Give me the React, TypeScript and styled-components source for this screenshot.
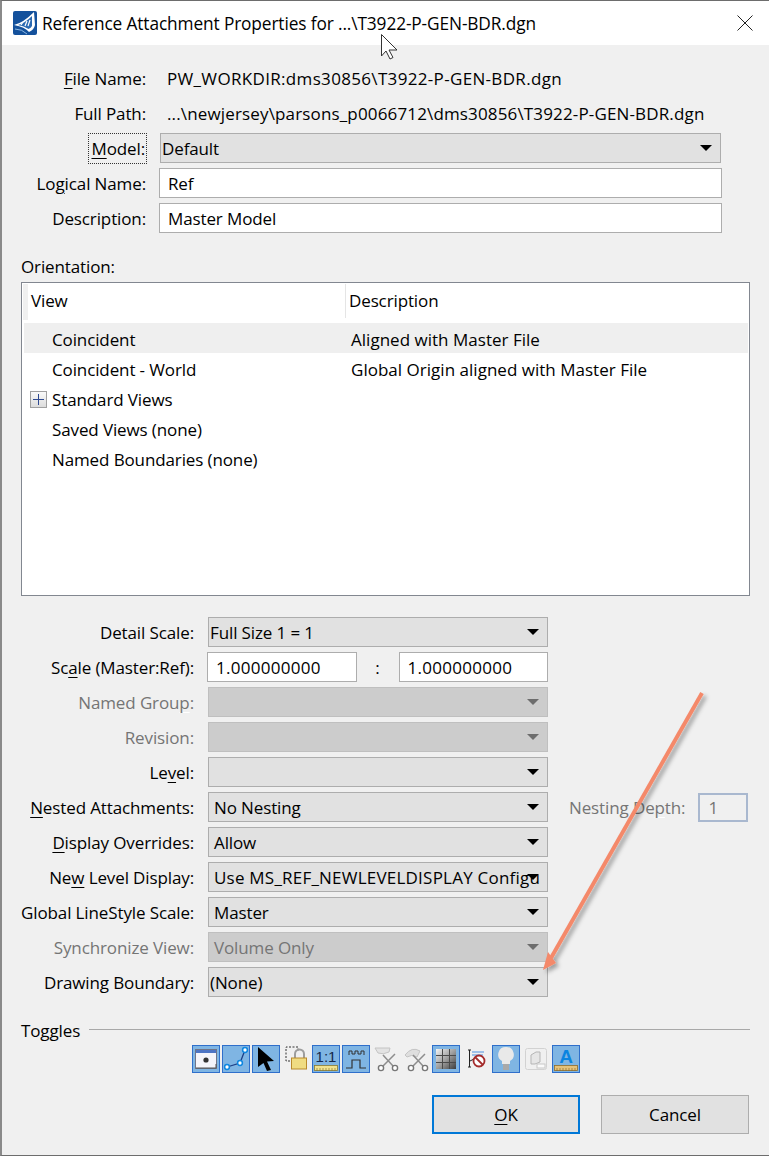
import React from 'react';
import styled, {createGlobalStyle} from 'styled-components';

const GlobalStyle = createGlobalStyle`
  html, body {
    margin: 0;
    padding: 0;
    background: #f0f0f0;
  }
  * {
    box-sizing: border-box;
  }
`;

const Dialog = styled('div')`
  position: relative;
  width: 769px;
  height: 1156px;
  overflow: hidden;
  background: #f0f0f0;
  color: #000;
  font-family: "Open Sans", "Noto Sans", sans-serif;
  font-size: 17px;
  letter-spacing: -0.12px;
  border-top: 1px solid #6d6d6d;
  border-left: 2px solid #8a8a8a;
  border-bottom: 1px solid #6d6d6d;
`;

const TitleBar = styled('div')`
  height: 44px;
  background: #fff;
  display: flex;
  align-items: center;
  padding: 0 16px 0 11px;
`;

const TitleText = styled('div')`
  flex: 1;
  margin-left: 5px;
  font-size: 17.3px;
  white-space: nowrap;
`;

const Body = styled('div')`
  display: flex;
  flex-direction: column;
  padding: 0 19px 0 19px;
`;

const HeaderGrid = styled('div')`
  display: grid;
  grid-template-columns: 125px 1fr;
  column-gap: 13px;
  row-gap: 5px;
  margin-top: 18px;
  align-items: center;
`;

const Label = styled('div')<{$disabled?: boolean}>`
  text-align: right;
  white-space: nowrap;
  color: ${p => (p.$disabled ? '#757575' : '#000')};
`;

const Key = styled('span')<{$light?: boolean}>`
  text-decoration: underline;
  text-decoration-color: ${p => (p.$light ? '#fff' : '#000')};
  text-underline-offset: 3px;
  text-decoration-thickness: 1px;
`;

const FocusRing = styled('span')`
  outline: 1px dotted #333;
  padding: 3px 1px 3px 2px;
`;

const StaticValue = styled('div')<{$spacing: number}>`
  height: 30px;
  line-height: 32px;
  margin-left: 8px;
  white-space: nowrap;
  letter-spacing: ${p => p.$spacing}px;
`;

const Combo = styled('div')<{$disabled?: boolean; $inset?: boolean; $header?: boolean}>`
  position: relative;
  height: 30px;
  width: ${p => (p.$header ? '561px' : '100%')};
  margin-left: ${p => (p.$header ? '1px' : '0')};
  display: flex;
  align-items: center;
  padding-left: ${p => (p.$inset ? '5px' : '1px')};
  white-space: nowrap;
  overflow: hidden;
  background: ${p => (p.$disabled ? '#cccccc' : '#e1e1e1')};
  border: 1px solid ${p => (p.$disabled ? '#bfbfbf' : '#adadad')};
  color: ${p => (p.$disabled ? '#757575' : '#000')};
`;

const ComboArrow = styled('span')<{$disabled?: boolean}>`
  position: absolute;
  right: 8px;
  top: 11px;
  width: 0;
  height: 0;
  border-left: 6px solid transparent;
  border-right: 6px solid transparent;
  border-top: 6px solid ${p => (p.$disabled ? '#6d6d6d' : '#000')};
`;

const WideText = styled('span')`
  letter-spacing: 0.22px;
`;

const TextBox = styled('div')<{$width?: number}>`
  height: 30px;
  width: ${p => (p.$width ? `${p.$width}px` : '100%')};
  display: flex;
  align-items: center;
  padding-left: 8px;
  background: #fff;
  border: 1px solid #adadad;
`;

const ScaleBox = styled(TextBox)`
  letter-spacing: 0.28px;
`;

const SectionLabel = styled('div')`
  margin-top: 21px;
  height: 28px;
  line-height: 25px;
`;

const Table = styled('div')`
  height: 314px;
  width: 729px;
  background: #fff;
  border: 1px solid #828790;
  padding: 1px 1px 0 2px;
`;

const TableHead = styled('div')`
  display: grid;
  grid-template-columns: 317px 1fr;
  height: 36px;
  margin-bottom: 3px;
  align-items: center;
  border-left: 5px solid #f0f0f0;
  margin-left: -1px;
`;

const HeadCell = styled('div')<{$sep?: boolean}>`
  padding-left: 3px;
  border-left: ${p => (p.$sep ? '1px solid #e5e5e5' : 'none')};
  line-height: 34px;
  height: 34px;
  margin-top: -2px;
`;

const TreeRow = styled('div')<{$active?: boolean}>`
  display: grid;
  grid-template-columns: 327px 1fr;
  height: 30px;
  padding-top: 2px;
  align-items: center;
  background: ${p => (p.$active ? '#efefef' : 'transparent')};
`;

const TreeName = styled('div')`
  display: flex;
  align-items: center;
  padding-left: 28px;
  position: relative;
  white-space: nowrap;
`;

const TreeDesc = styled('div')`
  white-space: nowrap;
  letter-spacing: 0.02px;
`;

const Expander = styled('span')`
  position: absolute;
  left: 6px;
  top: 3px;
  width: 17px;
  height: 17px;
  border: 1px solid #a0a0a0;
  background: linear-gradient(#fafafa, #dcdcdc);
  &::before, &::after {
    content: '';
    position: absolute;
    background: #2f4a92;
  }
  &::before {
    left: 2px;
    right: 2px;
    top: 7px;
    height: 1px;
  }
  &::after {
    top: 2px;
    bottom: 2px;
    left: 7px;
    width: 1px;
  }
`;

const FormGrid = styled('div')`
  display: grid;
  grid-template-columns: 173px 340px 1fr;
  column-gap: 14px;
  row-gap: 5px;
  margin-top: 21px;
  align-items: center;
`;

const ScaleFields = styled('div')`
  display: flex;
  align-items: center;
  margin-left: -1px;
`;

const ScaleColon = styled('span')`
  width: 42px;
  flex: none;
  text-align: center;
`;

const NestingCell = styled('div')`
  display: flex;
  align-items: center;
  gap: 13px;
  margin-left: 7px;
  white-space: nowrap;
  color: #757575;
`;

const DepthBox = styled('div')`
  flex: none;
  width: 50px;
  height: 29px;
  padding-left: 8px;
  display: flex;
  align-items: center;
  border: 2px solid #a9b8cf;
`;

const TogglesHead = styled('div')`
  display: flex;
  align-items: center;
  margin-top: 18px;
  height: 30px;
  gap: 9px;
`;

const TogglesRule = styled('div')`
  flex: 1;
  height: 1px;
  margin-top: -2px;
  background: #a8a8a8;
`;

const IconRow = styled('div')`
  display: flex;
  align-items: center;
  margin: 0 0 0 171px;
  height: 28px;
`;

const ToggleIcon = styled('div')<{$on?: boolean; $w?: number; $ml?: number}>`
  flex: none;
  width: ${p => p.$w ?? 28}px;
  height: 28px;
  margin-left: ${p => p.$ml ?? 0}px;
  background: ${p => (p.$on ? '#7fb5e3' : 'transparent')};
  border: ${p => (p.$on ? '1px solid #2f6fcb' : 'none')};
  display: flex;
  flex-direction: column;
  align-items: center;
  justify-content: center;
  & svg {
    display: block;
  }
`;

const IconCaption = styled('span')<{$blue?: boolean}>`
  display: block;
  height: 17px;
  line-height: 17px;
  letter-spacing: 0;
  font-family: "Liberation Sans", sans-serif;
  font-size: ${p => (p.$blue ? '19px' : '15px')};
  font-weight: ${p => (p.$blue ? 700 : 400)};
  color: ${p => (p.$blue ? '#0a84e0' : '#14284a')};
`;

const ButtonRow = styled('div')`
  display: flex;
  justify-content: flex-end;
  gap: 21px;
  margin-top: 22px;
  padding-right: 1px;
`;

const Button = styled('div')<{$primary?: boolean}>`
  width: 148px;
  height: 39px;
  display: flex;
  align-items: center;
  justify-content: center;
  background: #e1e1e1;
  border: ${p => (p.$primary ? '2px solid #0078d7' : '1px solid #adadad')};
`;

const Overlay = styled('svg')`
  position: absolute;
  left: -2px;
  top: -1px;
  pointer-events: none;
`;

const AppIcon = () => (
  <svg width="24" height="24" viewBox="0 0 24 24">
    <rect width="24" height="24" rx="2" fill="#14519c" />
    <path d="M1 14 Q10 12 21 1 L22 14 Q21 19 16 21 Q12 16 1 14 Z" fill="#fff" />
    <path d="M5 14 Q12 12 19 5 L19 15 Q18 17 15.5 18 Q11 15 5 14 Z" fill="#2a69b2" />
    <path d="M8 14 L10 11 M12 15 L14 10 M15 15 L17 9" stroke="#fff" strokeWidth="1.2" />
    <path d="M2 18 Q9 18 14 23" stroke="#8db9e4" strokeWidth="1" fill="none" />
  </svg>
);

const CloseGlyph = () => (
  <svg width="16" height="16" viewBox="0 0 16 16">
    <path d="M0.5 0.5 L15.5 15.5 M15.5 0.5 L0.5 15.5" stroke="#222" strokeWidth="1" fill="none" />
  </svg>
);

const Ruler = ({fill, tick}: {fill: string; tick: string}) => (
  <svg width="24" height="6" viewBox="0 0 24 6">
    <rect x="0.5" y="0.5" width="23" height="5" fill={fill} stroke={tick} strokeWidth="0.8" />
    <path d="M3 3 V6 M6 3 V6 M9 3 V6 M12 3 V6 M15 3 V6 M18 3 V6 M21 3 V6" stroke={tick} strokeWidth="0.7" />
  </svg>
);

const ScissorsGlyph = ({shade}: {shade: 'top' | 'round'}) => (
  <svg width="26" height="26" viewBox="0 0 26 26">
    {shade === 'top'
      ? <path d="M1 2 H16 L15 6 Q9 9 4 7 Z" fill="#e3e3e3" stroke="#c4c4c4" />
      : <path d="M1 9 Q8 0 16 5 L13 11 Q7 8 3 11 Z" fill="#dedede" stroke="#c4c4c4" />}
    <path d="M9 9 L19 20 M21 8 L9 20" stroke="#8d8d8d" strokeWidth="1.5" fill="none" />
    <circle cx="7" cy="22" r="2.6" fill="#fff" stroke="#777" strokeWidth="1.4" />
    <circle cx="21" cy="22" r="2.6" fill="#fff" stroke="#777" strokeWidth="1.4" />
  </svg>
);

const Icons = () => (
  <IconRow>
    <ToggleIcon $on>
      <svg width="22" height="20" viewBox="0 0 22 20">
        <rect x="0.5" y="0.5" width="21" height="19" fill="#f4f4fa" stroke="#6f7488" />
        <rect x="1" y="1" width="20" height="3" fill="#4d74c4" />
        <circle cx="11" cy="11" r="2.6" fill="#333" />
        <path d="M1 19 H21 V15" stroke="#555" fill="none" />
      </svg>
    </ToggleIcon>
    <ToggleIcon $on $ml={2}>
      <svg width="26" height="26" viewBox="0 0 26 26">
        <path d="M4 21 L17 17 L22 4" stroke="#1c3f86" strokeWidth="1.3" fill="none" />
        <circle cx="4" cy="21" r="2.4" fill="#fff" stroke="#0d87e0" strokeWidth="1.5" />
        <circle cx="17" cy="17" r="2.4" fill="#fff" stroke="#0d87e0" strokeWidth="1.5" />
        <circle cx="22" cy="4" r="2.4" fill="#fff" stroke="#0d87e0" strokeWidth="1.5" />
      </svg>
    </ToggleIcon>
    <ToggleIcon $on $ml={2}>
      <svg width="20" height="26" viewBox="0 0 20 26">
        <path d="M2 1 L18 15 L11 15.5 L15 24 L11 25 L7.5 17 L2 21 Z" fill="#000" />
      </svg>
    </ToggleIcon>
    <ToggleIcon $w={23} $ml={5}>
      <svg width="23" height="26" viewBox="0 0 23 26">
        <path d="M5 15 H1 V1 H13 V5" fill="none" stroke="#333" strokeDasharray="2 1.5" />
        <path d="M10 12 V8 A4.5 4.5 0 0 1 19 8 V12" fill="none" stroke="#9d9d9d" strokeWidth="2" />
        <rect x="6.5" y="12" width="15" height="11" fill="#f0dc82" stroke="#b98a2c" />
      </svg>
    </ToggleIcon>
    <ToggleIcon $on $ml={4}>
      <IconCaption>1:1</IconCaption>
      <Ruler fill="#f1e28e" tick="#8b7a30" />
    </ToggleIcon>
    <ToggleIcon $on $ml={2}>
      <svg width="24" height="22" viewBox="0 0 24 22">
        <path d="M5 7 V3 H8 V6 H11 V3 H14 V6 H17 V3 H20 V7" stroke="#333" fill="none" />
        <path d="M2 20 H8 V12 H16 V20 H22" stroke="#333" strokeWidth="1.2" fill="none" />
      </svg>
    </ToggleIcon>
    <ToggleIcon $w={26} $ml={4}>
      <ScissorsGlyph shade="top" />
    </ToggleIcon>
    <ToggleIcon $w={26} $ml={4}>
      <ScissorsGlyph shade="round" />
    </ToggleIcon>
    <ToggleIcon $on $ml={2}>
      <svg width="20" height="20" viewBox="0 0 20 20">
        <defs>
          <linearGradient id="gridShade" x1="0" y1="0" x2="1" y2="1">
            <stop offset="0" stopColor="#f4f4f4" />
            <stop offset="0.5" stopColor="#a0a0a0" />
            <stop offset="1" stopColor="#3c3c3c" />
          </linearGradient>
        </defs>
        <rect width="20" height="20" fill="url(#gridShade)" />
        <path d="M6.5 0 V20 M13.5 0 V20 M0 6.5 H20 M0 13.5 H20" stroke="#4a4a4a" strokeWidth="1" />
      </svg>
    </ToggleIcon>
    <ToggleIcon $w={18} $ml={8}>
      <svg width="18" height="20" viewBox="0 0 18 20">
        <path d="M1.5 1 V18 M0 1 H3 M0 18 H3 M2 12 L6 10" stroke="#222" strokeWidth="1" fill="none" />
        <path d="M4 3 H16 M4 6 H15" stroke="#4a90e2" strokeWidth="1.2" />
        <circle cx="11" cy="12" r="5.5" fill="#fff" stroke="#a42c2c" strokeWidth="1.8" />
        <path d="M7 8 L15 16" stroke="#a42c2c" strokeWidth="1.8" />
      </svg>
    </ToggleIcon>
    <ToggleIcon $on $ml={6}>
      <svg width="18" height="26" viewBox="0 0 18 26">
        <path d="M9 1 A7.5 7.5 0 0 1 13 15 V18 H5 V15 A7.5 7.5 0 0 1 9 1 Z" fill="#e9e9e9" />
        <rect x="6" y="18" width="6" height="6" fill="#a9a9a9" />
      </svg>
    </ToggleIcon>
    <ToggleIcon $w={24} $ml={4}>
      <svg width="22" height="22" viewBox="0 0 22 22">
        <rect x="0.5" y="0.5" width="21" height="21" rx="2" fill="#f0f0f0" stroke="#d2d2d2" />
        <path d="M6 7 L11 4 H15 V14 L10 16 H6 Z" fill="#e6e6e6" stroke="#b5b5b5" />
        <rect x="12" y="16" width="8" height="4" fill="#fafafa" stroke="#c8c8c8" />
      </svg>
    </ToggleIcon>
    <ToggleIcon $on $ml={4}>
      <IconCaption $blue>A</IconCaption>
      <Ruler fill="#e5c27a" tick="#8f6d2a" />
    </ToggleIcon>
  </IconRow>
);

const PageOverlay = () => (
  <Overlay width="769" height="1156" viewBox="0 0 769 1156">
    <defs>
      <filter id="arrowShadow" x="-20%" y="-20%" width="140%" height="140%">
        <feDropShadow dx="3" dy="3" stdDeviation="2" floodColor="#000" floodOpacity="0.35" />
      </filter>
    </defs>
    <g filter="url(#arrowShadow)">
      <path d="M702 693 L551 958" stroke="#f4896b" strokeWidth="4" fill="none" />
      <path d="M543 970 L548 952 L556 963 Z" fill="#f4896b" />
    </g>
    <path
      d="M381.5 34.5 L381.5 56 L386 51 L390 59 L393 57.5 L389 50 L397 50 Z"
      fill="#fff"
      stroke="#333"
      strokeWidth="1"
    />
  </Overlay>
);

const App = () => (
  <>
    <GlobalStyle />
    <Dialog>
      <TitleBar>
        <AppIcon />
        <TitleText>Reference Attachment Properties for ...\T3922-P-GEN-BDR.dgn</TitleText>
        <CloseGlyph />
      </TitleBar>
      <Body>
        <HeaderGrid>
          <Label><Key>F</Key>ile Name:</Label>
          <StaticValue $spacing={0.33}>PW_WORKDIR:dms30856\T3922-P-GEN-BDR.dgn</StaticValue>
          <Label>Full Path:</Label>
          <StaticValue $spacing={0.15}>...\newjersey\parsons_p0066712\dms30856\T3922-P-GEN-BDR.dgn</StaticValue>
          <Label><FocusRing><Key>M</Key>odel:</FocusRing></Label>
          <Combo $header>Default<ComboArrow /></Combo>
          <Label>Lo<Key>g</Key>ical Name:</Label>
          <TextBox $width={563}>Ref</TextBox>
          <Label>Description:</Label>
          <TextBox $width={563}>Master Model</TextBox>
        </HeaderGrid>

        <SectionLabel>Orientation:</SectionLabel>
        <Table>
          <TableHead>
            <HeadCell>View</HeadCell>
            <HeadCell $sep>Description</HeadCell>
          </TableHead>
          <TreeRow $active>
            <TreeName>Coincident</TreeName>
            <TreeDesc>Aligned with Master File</TreeDesc>
          </TreeRow>
          <TreeRow>
            <TreeName>Coincident - World</TreeName>
            <TreeDesc>Global Origin aligned with Master File</TreeDesc>
          </TreeRow>
          <TreeRow>
            <TreeName><Expander />Standard Views</TreeName>
          </TreeRow>
          <TreeRow>
            <TreeName>Saved Views (none)</TreeName>
          </TreeRow>
          <TreeRow>
            <TreeName>Named Boundaries (none)</TreeName>
          </TreeRow>
        </Table>

        <FormGrid>
          <Label>Detail Scale:</Label>
          <Combo>Full Size 1 = 1<ComboArrow /></Combo>
          <span />

          <Label>Sc<Key>a</Key>le (Master:Ref):</Label>
          <ScaleFields>
            <ScaleBox $width={150}>1.000000000</ScaleBox>
            <ScaleColon>:</ScaleColon>
            <ScaleBox $width={150}>1.000000000</ScaleBox>
          </ScaleFields>
          <span />

          <Label $disabled>Named Grou<Key $light>p</Key>:</Label>
          <Combo $disabled><ComboArrow $disabled /></Combo>
          <span />

          <Label $disabled>Revision:</Label>
          <Combo $disabled><ComboArrow $disabled /></Combo>
          <span />

          <Label>Le<Key>v</Key>el:</Label>
          <Combo><ComboArrow /></Combo>
          <span />

          <Label><Key>N</Key>ested Attachments:</Label>
          <Combo $inset>No Nesting<ComboArrow /></Combo>
          <NestingCell>
            <span>Nesting De<Key $light>p</Key>th:</span>
            <DepthBox>1</DepthBox>
          </NestingCell>

          <Label><Key>D</Key>isplay Overrides:</Label>
          <Combo $inset>Allow<ComboArrow /></Combo>
          <span />

          <Label>Ne<Key>w</Key> Level Display:</Label>
          <Combo $inset><WideText>Use MS_REF_NEWLEVELDISPLAY Configu</WideText><ComboArrow /></Combo>
          <span />

          <Label>Global LineStyle Scale:</Label>
          <Combo $inset>Master<ComboArrow /></Combo>
          <span />

          <Label $disabled>Synchronize View:</Label>
          <Combo $disabled $inset>Volume Only<ComboArrow $disabled /></Combo>
          <span />

          <Label>Drawing Boundary:</Label>
          <Combo>(None)<ComboArrow /></Combo>
          <span />
        </FormGrid>

        <TogglesHead>
          Toggles
          <TogglesRule />
        </TogglesHead>
        <Icons />
        <ButtonRow>
          <Button $primary><span><Key>O</Key>K</span></Button>
          <Button>Cancel</Button>
        </ButtonRow>
      </Body>
      <PageOverlay />
    </Dialog>
  </>
);

export default App;
